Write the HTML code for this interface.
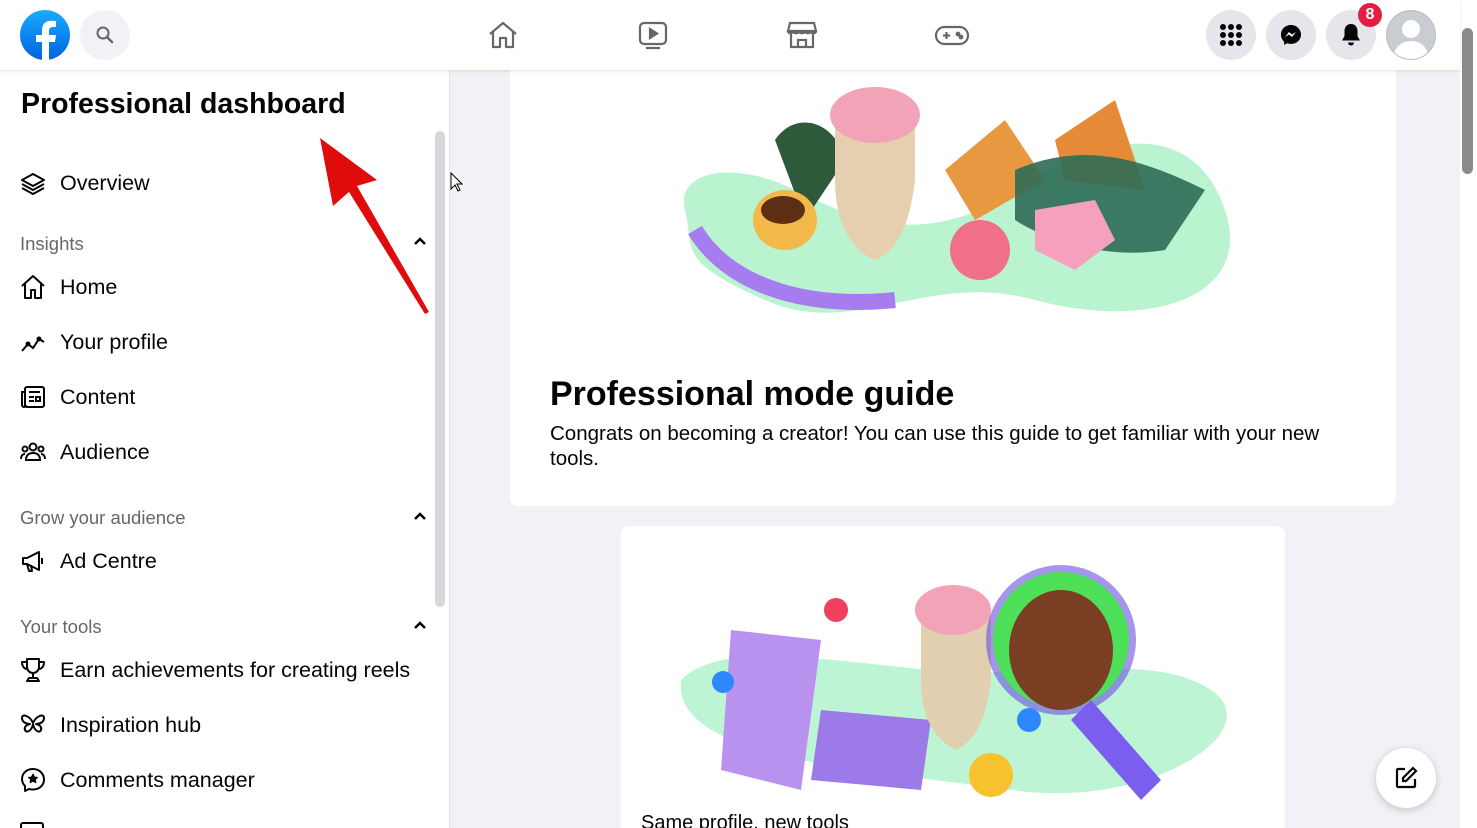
<!DOCTYPE html><html><head><style>
*{margin:0;padding:0;box-sizing:border-box}
html,body{width:1477px;height:828px;overflow:hidden}
body{background:#f0f2f5;font-family:"Liberation Sans",sans-serif;position:relative}
.hdr{position:absolute;left:0;top:0;width:1460px;height:70px;background:#fff;box-shadow:0 1px 3px rgba(0,0,0,.12);z-index:5}
.side{position:absolute;left:0;top:70px;width:450px;height:758px;background:#fff;border-right:1px solid #e4e6eb}
.circ{position:absolute;width:50px;height:50px;border-radius:50%;background:#e4e6eb;top:10px}
.it{position:absolute;left:60px;font-size:21.5px;color:#050505}
.ic{position:absolute;left:20px;width:26px;height:26px}
.sec{position:absolute;left:20px;font-size:18.5px;color:#65676b}
.car{position:absolute;left:413px;width:14px;height:10px}
.card{position:absolute;background:#fff;border-radius:8px;overflow:hidden}
</style></head><body>
<div class="hdr">
 <svg style="position:absolute;left:20px;top:10px" width="50" height="50" viewBox="0 0 50 50"><defs><linearGradient id="g" x1="0" y1="0" x2="0" y2="1"><stop offset="0" stop-color="#18acfe"/><stop offset="1" stop-color="#0163e0"/></linearGradient></defs><circle cx="25" cy="25" r="25" fill="url(#g)"/><path d="M29 50V32h6l1-7h-7v-4c0-2 1-4 4-4h3v-6c-1 0-3-.3-5-.3-5.5 0-9 3.3-9 9.3V25h-6v7h6v18z" fill="#fff"/></svg>
 <div class="circ" style="left:80px;background:#f0f2f5"></div>
 <svg style="position:absolute;left:95px;top:25px" width="20" height="20" viewBox="0 0 20 20"><circle cx="8" cy="8" r="5.5" fill="none" stroke="#65676b" stroke-width="2"/><path d="M12 12l5 5" stroke="#65676b" stroke-width="2.4" stroke-linecap="round"/></svg>
 <svg style="position:absolute;left:487px;top:19px" width="32" height="32" viewBox="0 0 32 32" fill="none" stroke="#65676b" stroke-width="2.2" stroke-linejoin="round"><path d="M3 15L16 4l13 11M6 13v15h7v-9h6v9h7V13"/></svg>
 <svg style="position:absolute;left:637px;top:19px" width="32" height="32" viewBox="0 0 32 32" fill="none" stroke="#65676b" stroke-width="2.2"><rect x="3" y="4" width="26" height="21" rx="4"/><path d="M13 10v9l7-4.5z" fill="#65676b"/><path d="M9 29h14"/></svg>
 <svg style="position:absolute;left:786px;top:19px" width="32" height="32" viewBox="0 0 32 32" fill="none" stroke="#65676b" stroke-width="2.2"><path d="M4 4h24l2 8H2zM2 12c0 3 5 3 5 0 0 3 6 3 6 0 0 3 6 3 6 0 0 3 6 3 6 0 0 3 5 3 5 0M5 15v13h22V15M12 28v-7h8v7"/></svg>
 <svg style="position:absolute;left:934px;top:22px" width="36" height="28" viewBox="0 0 36 28" fill="none" stroke="#65676b" stroke-width="2.2"><rect x="2" y="5" width="32" height="17" rx="8.5"/><path d="M9 13.5h7M12.5 10v7"/><circle cx="24" cy="12" r="1.3" fill="#65676b"/><circle cx="27" cy="15" r="1.3" fill="#65676b"/></svg>
 <div class="circ" style="left:1206px"></div>
 <svg style="position:absolute;left:1219px;top:23px" width="24" height="24" viewBox="0 0 24 24" fill="#050505"><circle cx="4" cy="4" r="3"/><circle cx="12" cy="4" r="3"/><circle cx="20" cy="4" r="3"/><circle cx="4" cy="12" r="3"/><circle cx="12" cy="12" r="3"/><circle cx="20" cy="12" r="3"/><circle cx="4" cy="20" r="3"/><circle cx="12" cy="20" r="3"/><circle cx="20" cy="20" r="3"/></svg>
 <div class="circ" style="left:1266px"></div>
 <svg style="position:absolute;left:1280px;top:24px" width="22" height="22" viewBox="0 0 22 22"><path d="M11 1C5.4 1 1 5.1 1 10.6c0 2.9 1.2 5.4 3.1 7.1V21l3-1.7c1.2.4 2.5.6 3.9.6 5.6 0 10-4.1 10-9.3S16.6 1 11 1z" fill="#050505"/><path d="M5 13l4-5 3 2.5 4-2.5-4 5-3-2.5z" fill="#fff"/></svg>
 <div class="circ" style="left:1326px"></div>
 <svg style="position:absolute;left:1340px;top:23px" width="22" height="24" viewBox="0 0 22 24" fill="#050505"><path d="M11 1c-4 0-6.5 3-6.5 7v5L2 17.5h18L17.5 13V8c0-4-2.5-7-6.5-7z"/><path d="M8 19.5h6a3 3 0 0 1-6 0z"/></svg>
 <div style="position:absolute;left:1358px;top:3px;width:24px;height:24px;border-radius:50%;background:#e41e3f;color:#fff;font-weight:bold;font-size:16px;text-align:center;line-height:24px">8</div>
 <div class="circ" style="left:1386px;background:#c9ccd1;overflow:hidden;border:1px solid #bbb"><div style="position:absolute;left:15px;top:9px;width:18px;height:18px;border-radius:50%;background:#fff"></div><div style="position:absolute;left:7px;top:30px;width:34px;height:30px;border-radius:50%;background:#fff"></div></div>
</div>
<div style="position:absolute;left:1460px;top:0;width:17px;height:828px;background:#fff"></div>
<div style="position:absolute;left:1462px;top:28px;width:11px;height:146px;background:#8a8a8a;border-radius:6px"></div>
<div class="side">
 <div style="position:absolute;left:21px;top:18px;font-size:28.5px;font-weight:bold;color:#050505">Professional dashboard</div>
 <div style="position:absolute;left:435px;top:61px;width:10px;height:476px;background:#d4d6da;border-radius:5px"></div>
</div>
<div style="position:absolute;left:0;top:70px;width:450px;height:758px;overflow:hidden">
 <svg class="ic" style="top:101px" viewBox="0 0 26 26" fill="none" stroke="#050505" stroke-width="2" stroke-linejoin="round"><path d="M13 3L2 9l11 6 11-6zM2 13l11 6 11-6M2 17l11 6 11-6"/></svg>
 <div class="it" style="top:101px">Overview</div>
 <div class="sec" style="top:163px">Insights</div>
 <svg class="car" style="top:166px" viewBox="0 0 14 10"><path d="M2 8l5-5 5 5" fill="none" stroke="#050505" stroke-width="2.5"/></svg>
 <svg class="ic" style="top:204px" viewBox="0 0 26 26" fill="none" stroke="#050505" stroke-width="2" stroke-linejoin="round"><path d="M2 12L13 2l11 10M5 10v14h6v-8h4v8h6V10"/></svg>
 <div class="it" style="top:205px">Home</div>
 <svg class="ic" style="top:259px" viewBox="0 0 26 26" fill="none" stroke="#050505" stroke-width="2"><path d="M2 22l6-7 5 4 6-9 5 3"/><circle cx="8" cy="15" r="1.5"/><circle cx="19" cy="10" r="1.5"/></svg>
 <div class="it" style="top:260px">Your profile</div>
 <svg class="ic" style="top:314px" viewBox="0 0 26 26" fill="none" stroke="#050505" stroke-width="2"><rect x="5" y="3" width="19" height="20" rx="2"/><path d="M5 8H2v13a2 2 0 0 0 4 0M9 8h11M9 13h5M9 17h5M16 13h4v4h-4z"/></svg>
 <div class="it" style="top:315px">Content</div>
 <svg class="ic" style="top:369px" viewBox="0 0 26 26" fill="none" stroke="#050505" stroke-width="2"><circle cx="13" cy="8" r="3.5"/><circle cx="5" cy="10" r="2.5"/><circle cx="21" cy="10" r="2.5"/><path d="M6 21c0-5 3-7 7-7s7 2 7 7zM1 20c0-3 1.5-5 4-5M25 20c0-3-1.5-5-4-5"/></svg>
 <div class="it" style="top:370px">Audience</div>
 <div class="sec" style="top:437px">Grow your audience</div>
 <svg class="car" style="top:441px" viewBox="0 0 14 10"><path d="M2 8l5-5 5 5" fill="none" stroke="#050505" stroke-width="2.5"/></svg>
 <svg class="ic" style="top:478px" viewBox="0 0 26 26" fill="none" stroke="#050505" stroke-width="2" stroke-linejoin="round"><path d="M3 10v6h4l12 6V4L7 10zM7 16l2 7h3l-1-6M22 10v6"/></svg>
 <div class="it" style="top:479px">Ad Centre</div>
 <div class="sec" style="top:546px">Your tools</div>
 <svg class="car" style="top:550px" viewBox="0 0 14 10"><path d="M2 8l5-5 5 5" fill="none" stroke="#050505" stroke-width="2.5"/></svg>
 <svg class="ic" style="top:587px" viewBox="0 0 26 26" fill="none" stroke="#050505" stroke-width="2" stroke-linejoin="round"><path d="M7 2h12v8a6 6 0 0 1-12 0zM7 5H2c0 5 3 7 5 7M19 5h5c0 5-3 7-5 7M13 16v5M7 24h12l-2-3H9z"/></svg>
 <div class="it" style="top:588px">Earn achievements for creating reels</div>
 <svg class="ic" style="top:642px" viewBox="0 0 26 26" fill="none" stroke="#050505" stroke-width="2" stroke-linejoin="round"><path d="M13 11C10 4 2 1 2 6c0 4 4 6 8 6-4 1-6 3-5 6 2 4 7 0 8-6 1 6 6 10 8 6 1-3-1-5-5-6 4 0 8-2 8-6 0-5-8-2-11 5z"/></svg>
 <div class="it" style="top:643px">Inspiration hub</div>
 <svg class="ic" style="top:697px" viewBox="0 0 26 26" fill="none" stroke="#050505" stroke-width="2" stroke-linejoin="round"><path d="M13 2C7 2 2 6 2 12c0 3 1 5 3 7v5l4-2c1 .3 2.5.5 4 .5 6 0 11-4 11-10S19 2 13 2z"/><path d="M13 7l1.5 3 3 .5-2.2 2 .6 3.2-2.9-1.5-2.9 1.5.6-3.2-2.2-2 3-.5z" fill="#050505" stroke-width="1"/></svg>
 <div class="it" style="top:698px">Comments manager</div>
 <div style="position:absolute;left:20px;top:752px;width:24px;height:10px;border:2px solid #050505;border-bottom:0;border-radius:3px 3px 0 0"></div>
</div>
<svg style="position:absolute;left:310px;top:130px;z-index:6" width="130" height="190" viewBox="0 0 130 190"><path d="M10 8l57 42-20 6 72 126-4 2-76-122-16 14z" fill="#e00c0c"/></svg>
<svg style="position:absolute;left:449px;top:171px" width="14" height="22" viewBox="0 0 14 22"><path d="M2 2v16l4-4 3 6 2-1-3-6h5z" fill="#fff" stroke="#000" stroke-width="1"/></svg>
<div class="card" style="left:510px;top:62px;width:886px;height:444px;border-radius:0 0 8px 8px">
 <svg style="position:absolute;left:165px;top:18px" width="560" height="260" viewBox="0 0 560 260">
  <path d="M10 130C0 90 60 80 120 110S250 170 340 110 520 40 550 130 470 250 360 220 180 260 90 220 20 170 10 130z" fill="#b9f3cf"/>
  <path d="M20 150c30 50 100 80 200 70" stroke="#a77cf0" stroke-width="16" fill="none"/>
  <path d="M100 60c20-30 60-20 70 20l-40 60z" fill="#2d5a3a"/>
  <path d="M160 40c0-40 70-40 80 0v60c-5 40-15 70-40 80-25-10-40-40-40-80z" fill="#e5cfae"/>
  <ellipse cx="200" cy="35" rx="45" ry="28" fill="#f3a3b7"/>
  <path d="M270 90l60-50 40 60-70 40z" fill="#e79840"/>
  <path d="M380 60l60-40 30 90-80-10z" fill="#e58a36"/>
  <path d="M340 90c70-30 130-10 190 20l-40 60c-60 10-120-10-150-30z" fill="#2f6b55" opacity=".9"/>
  <circle cx="305" cy="170" r="30" fill="#f0708a"/>
  <path d="M360 130l60-10 20 40-40 30-40-20z" fill="#f6a0c0"/>
  <ellipse cx="110" cy="140" rx="32" ry="30" fill="#f2b94a"/>
  <ellipse cx="108" cy="130" rx="22" ry="14" fill="#5c2e13"/>
 </svg>
 <div style="position:absolute;left:40px;top:313px;font-size:34px;font-weight:bold;color:#050505">Professional mode guide</div>
 <div style="position:absolute;left:40px;top:359px;width:815px;font-size:20.5px;line-height:25px;color:#050505">Congrats on becoming a creator! You can use this guide to get familiar with your new tools.</div>
</div>
<div class="card" style="left:621px;top:526px;width:664px;height:320px">
 <svg style="position:absolute;left:50px;top:34px" width="560" height="250" viewBox="0 0 560 250">
  <path d="M10 120c40-40 140-20 250-10s220-20 280 20-60 120-200 100S0 200 10 120z" fill="#bdf5d4"/>
  <path d="M60 70l90 10-20 150-80-20z" fill="#b992f0"/>
  <path d="M150 150l110 10-10 70-110-10z" fill="#9c7ae8"/>
  <path d="M250 60c0-40 70-40 70 0v60c-5 40-15 60-35 70-20-10-35-30-35-70z" fill="#e2cfb0"/>
  <ellipse cx="282" cy="50" rx="38" ry="25" fill="#f3a3b7"/>
  <circle cx="390" cy="80" r="75" fill="#6b4ee0" opacity=".6"/>
  <circle cx="390" cy="80" r="68" fill="#4fe05a"/>
  <ellipse cx="390" cy="90" rx="52" ry="60" fill="#7a3e22"/>
  <path d="M420 140l70 80-20 20-70-80z" fill="#7b5ef0"/>
  <circle cx="165" cy="50" r="12" fill="#f04060"/>
  <circle cx="52" cy="122" r="11" fill="#2d88ff"/>
  <circle cx="358" cy="160" r="12" fill="#2d88ff"/>
  <circle cx="320" cy="215" r="22" fill="#f7c22e"/>
 </svg>
 <div style="position:absolute;left:20px;top:286px;font-size:20px;color:#050505">Same profile, new tools</div>
</div>
<div style="position:absolute;left:1376px;top:748px;width:60px;height:60px;border-radius:50%;background:#fff;box-shadow:0 2px 8px rgba(0,0,0,.2)"></div>
<svg style="position:absolute;left:1394px;top:766px" width="24" height="24" viewBox="0 0 24 24" fill="none" stroke="#050505" stroke-width="2.2"><path d="M11 3H4a1 1 0 0 0-1 1v16a1 1 0 0 0 1 1h16a1 1 0 0 0 1-1v-7"/><path d="M19 2l3 3-10 10H9v-3z"/></svg>
</body></html>
